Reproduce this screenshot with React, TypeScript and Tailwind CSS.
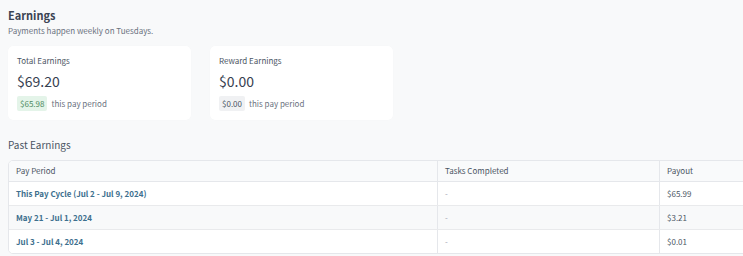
import React from "react";

const rows = [
  { period: "This Pay Cycle (Jul 2 - Jul 9, 2024)", tasks: "-", payout: "$65.99" },
  { period: "May 21 - Jul 1, 2024", tasks: "-", payout: "$3.21" },
  { period: "Jul 3 - Jul 4, 2024", tasks: "-", payout: "$0.01" },
];

function Card({ title, amount, badge, green }: { title: string; amount: string; badge: string; green?: boolean }) {
  return (
    <div className="w-[183px] h-[74px] bg-white rounded-[5px] pl-[9px] pt-[9px] shadow-[0_0_1px_rgba(0,0,0,0.04)]">
      <div className="text-[8px] leading-[12px] text-[#4b5563]">{title}</div>
      <div className="text-[14px] leading-[20px] mt-[4px] text-[#374151]">{amount}</div>
      <div className="flex items-center mt-[5px]">
        <span
          className={
            green
              ? "text-[8px] leading-[15px] px-[3px] rounded-[2px] bg-[#e4f4e9] text-[#4f8a62]"
              : "text-[8px] leading-[15px] px-[3px] rounded-[2px] bg-[#f0f1f3] text-[#4b5563]"
          }
        >
          {badge}
        </span>
        <span className="text-[8px] leading-[15px] text-[#6b7280] ml-[4px]">this pay period</span>
      </div>
    </div>
  );
}

export default function App() {
  return (
    <div
      className="w-[743px] h-[256px] overflow-hidden bg-[#f8f9fa] pl-[8px] pt-[8px]"
      style={{ fontFamily: '"Noto Sans CJK KR", "Noto Sans", sans-serif' }}
    >
      <div className="text-[11px] leading-[14px] font-bold text-[#3b4453]">Earnings</div>
      <div className="text-[8px] leading-[12px] text-[#6b7280] mt-[3px]">Payments happen weekly on Tuesdays.</div>
      <div className="flex gap-[19px] mt-[9px]">
        <Card title="Total Earnings" amount="$69.20" badge="$65.98" green />
        <Card title="Reward Earnings" amount="$0.00" badge="$0.00" />
      </div>
      <div className="text-[10px] leading-[14px] text-[#4b5563] mt-[18px]">Past Earnings</div>
      <div className="w-[760px] mt-[8px] bg-white rounded-[5px] border border-[#e5e7eb] overflow-hidden">
        <div className="flex h-[21px] bg-[#f9fafb] border-b border-[#e5e7eb] text-[8px] text-[#4b5563] items-center">
          <div className="w-[428px] pl-[7px]">Pay Period</div>
          <div className="w-[222px] pl-[7px] h-full flex items-center border-l border-[#e5e7eb]">Tasks Completed</div>
          <div className="flex-1 pl-[7px] h-full flex items-center border-l border-[#e5e7eb]">Payout</div>
        </div>
        {rows.map((r, i) => (
          <div
            key={i}
            className={
              "flex items-center text-[8px] " +
              (i === 1 ? "bg-[#f8f9fa] " : "bg-white ") +
              (i < rows.length - 1 ? "h-[24px] border-b border-[#e9eaec]" : "h-[23px]")
            }
          >
            <div className="w-[428px] pl-[7px] font-bold text-[#3d6f8e]">{r.period}</div>
            <div className="w-[222px] pl-[7px] h-full flex items-center border-l border-[#e5e7eb] text-[#9ca3af]">{r.tasks}</div>
            <div className="flex-1 pl-[7px] h-full flex items-center border-l border-[#e5e7eb] text-[#4b5563]">{r.payout}</div>
          </div>
        ))}
      </div>
    </div>
  );
}
